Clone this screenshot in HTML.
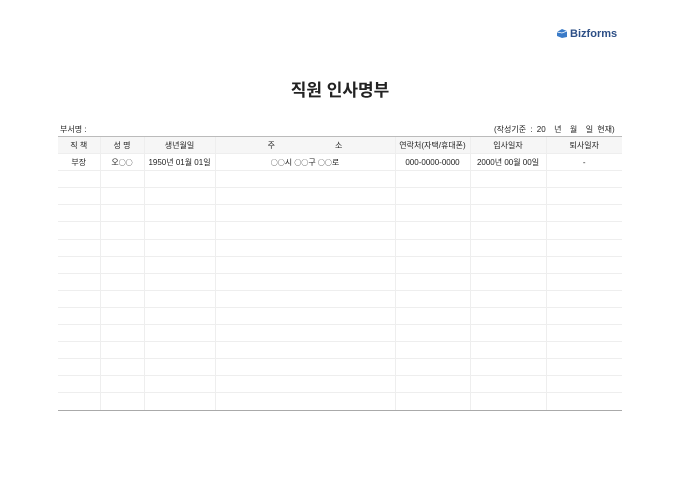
<!DOCTYPE html>
<html><head><meta charset="utf-8"><style>
body{margin:0;width:680px;height:481px;background:#fff;font-family:"Liberation Sans","Noto Sans CJK KR",sans-serif;color:#222;position:relative;overflow:hidden}
.logo{position:absolute;left:557px;top:28px;font-size:11px;color:#2d4f86;font-weight:600}
h1{position:absolute;left:0;width:680px;top:76px;margin:0;text-align:center;font-size:17px;font-weight:bold;letter-spacing:0}
.l{position:absolute;font-size:8px}
.o{font-family:"Noto Sans CJK KR",sans-serif;font-size:7px}
table{position:absolute;left:58px;top:136px;width:564px;border-collapse:collapse;table-layout:fixed;font-size:8px}
td,th{height:16.1px;border-left:1px solid #eee;border-bottom:1px solid #eee;text-align:center;font-weight:normal;padding:0;white-space:nowrap}
tr td:first-child,tr th:first-child{border-left:none}
th{background:#f6f6f6;border-top:1px solid #bbb}
tr:last-child td{border-bottom:1px solid #aaa}
</style></head><body>
<div class="logo"><svg width="10" height="10" viewBox="0 0 10 10" style="vertical-align:-1px"><path d="M0 4L5 1L10 3V9L5 10L0 8Z" fill="#3a7bc8"/><path d="M0 4L5 5L10 3" stroke="#fff" stroke-width=".7" fill="none"/></svg> Bizforms</div>
<h1>직원 인사명부</h1>
<div class="l" style="left:60px;top:124px">부서명 :</div>
<div class="l" style="left:494px;top:124px;word-spacing:2px">(작성기준 : 20 &nbsp;년 &nbsp;월 &nbsp;일 현재)</div>
<table>
<colgroup><col style="width:42px"><col style="width:44px"><col style="width:71px"><col style="width:180px"><col style="width:75px"><col style="width:76px"><col></colgroup>
<tr><th>직 책</th><th>성 명</th><th>생년월일</th><th>주 &nbsp; &nbsp; &nbsp; &nbsp; &nbsp; &nbsp; &nbsp; &nbsp; &nbsp; &nbsp; &nbsp; &nbsp; &nbsp; 소</th><th>연락처(자택/휴대폰)</th><th>입사일자</th><th>퇴사일자</th></tr>
<tr><td>부장</td><td>오<span class="o">○○</span></td><td>1950년 01월 01일</td><td><span class="o">○○</span>시 <span class="o">○○</span>구 <span class="o">○○</span>로</td><td>000-0000-0000</td><td>2000년 00월 00일</td><td>-</td></tr>
<tr><td></td><td></td><td></td><td></td><td></td><td></td><td></td></tr>
<tr><td></td><td></td><td></td><td></td><td></td><td></td><td></td></tr>
<tr><td></td><td></td><td></td><td></td><td></td><td></td><td></td></tr>
<tr><td></td><td></td><td></td><td></td><td></td><td></td><td></td></tr>
<tr><td></td><td></td><td></td><td></td><td></td><td></td><td></td></tr>
<tr><td></td><td></td><td></td><td></td><td></td><td></td><td></td></tr>
<tr><td></td><td></td><td></td><td></td><td></td><td></td><td></td></tr>
<tr><td></td><td></td><td></td><td></td><td></td><td></td><td></td></tr>
<tr><td></td><td></td><td></td><td></td><td></td><td></td><td></td></tr>
<tr><td></td><td></td><td></td><td></td><td></td><td></td><td></td></tr>
<tr><td></td><td></td><td></td><td></td><td></td><td></td><td></td></tr>
<tr><td></td><td></td><td></td><td></td><td></td><td></td><td></td></tr>
<tr><td></td><td></td><td></td><td></td><td></td><td></td><td></td></tr>
<tr><td></td><td></td><td></td><td></td><td></td><td></td><td></td></tr>
</table>
</body></html>
